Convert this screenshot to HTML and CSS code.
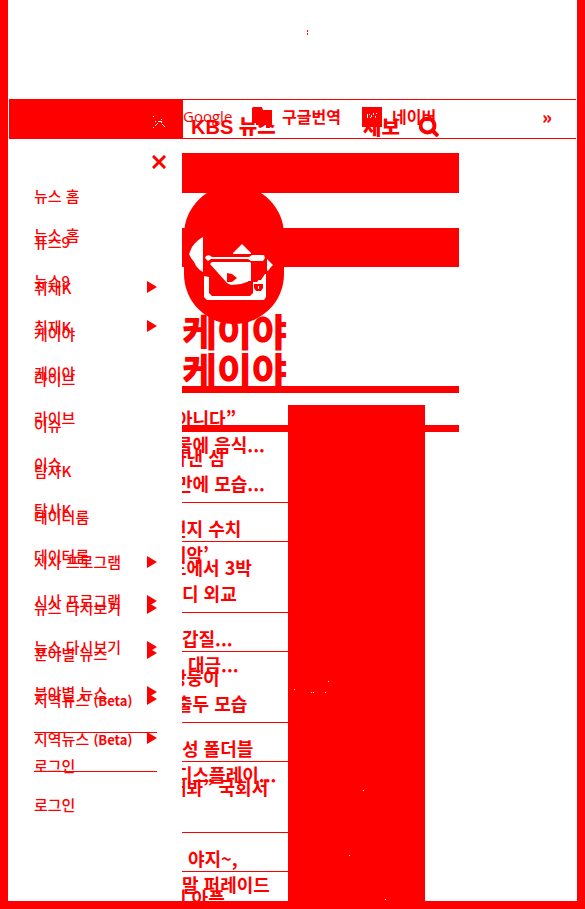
FILE: index.html
```html
<!DOCTYPE html>
<html lang="ko">
<head>
<meta charset="utf-8">
<meta name="viewport" content="width=device-width, initial-scale=1">
<title>KBS 뉴스</title>
<link rel="stylesheet" href="styles.css">
</head>
<body>
<div class="page">
  <div class="top"><svg class="dots" viewBox="0 0 1 5" aria-hidden="true"><path d="M0 0h1v2H0zM0 3h1v2H0z"/></svg></div>
  <header class="bar">
    <div class="bar-fill"><svg viewBox="0 0 13 13" aria-hidden="true"><path d="M0 0h1v1H0zM8 3h1v1H8zM2 5h1v1H2zM5 5h4v1H5zM8 6h1v1H8zM4 7h1v1H4zM9 8h1v1H9zM3 8h1v1H3zM10 9h1v1h-1zM2 9h1v1H2zM0 11h1v1H0zM11 10h1v1h-1z"/></svg></div>
    <div class="stack bar-body">
      <nav class="translate" aria-label="번역">
        <a href="#" class="google">Google</a>
        <a href="#" class="tool"><svg width="20" height="22" viewBox="0 0 20 22" aria-hidden="true"><path d="M1 0h9l1 3h9v16h-2v2h-4v-3H4v-2H0V1z"/></svg>구글번역</a>
        <a href="#" class="tool"><svg width="20" height="20" viewBox="0 0 20 20" aria-hidden="true"><path d="M0 0h20v20H0z"/><path class="w" d="M5 7h1v4H5zM7 7h1v1H7zM9 8h1v2H9zM11 6h1v2h-1zM14 6h1v1h-1zM13 9h1v2h-1zM8 10h1v1H8z"/></svg>네이버</a>
        <a href="#" class="more">»</a>
      </nav>
      <div class="brand">
        <a href="#" class="logo">KBS 뉴스</a>
        <a href="#" class="report">제보</a>
        <button class="search" aria-label="검색"><svg width="20" height="20" viewBox="0 0 20 20" aria-hidden="true"><circle cx="8.500" cy="8.500" r="7"/><path d="M13 13l6 6"/></svg></button>
      </div>
    </div>
  </header>
  <div class="body">
    <aside class="stack side">
      <div class="menu">
        <ul>
          <li><a href="#">뉴스 홈</a></li><li><a href="#">뉴스9</a></li><li class="sub"><a href="#">취재K</a></li><li><a href="#">케이야</a></li><li><a href="#">라이브</a></li><li><a href="#">이슈</a></li><li><a href="#">탐사K</a></li><li><a href="#">데이터룸</a></li><li class="sub"><a href="#">시사 프로그램</a></li><li class="sub"><a href="#">뉴스 다시보기</a></li><li class="sub"><a href="#">분야별 뉴스</a></li><li class="sub"><a href="#">지역뉴스 <small>(Beta)</small></a></li>
        </ul>
        <a href="#" class="login">로그인</a>
      </div>
      <div class="menu lower">
        <button class="close" aria-label="닫기"><svg width="14" height="14" viewBox="0 0 14 14" aria-hidden="true"><path d="M2 2l10 10M12 2L2 12"/></svg></button>
        <ul>
          <li><a href="#">뉴스 홈</a></li><li><a href="#">뉴스9</a></li><li class="sub"><a href="#">취재K</a></li><li><a href="#">케이야</a></li><li><a href="#">라이브</a></li><li><a href="#">이슈</a></li><li><a href="#">탐사K</a></li><li><a href="#">데이터룸</a></li><li class="sub"><a href="#">시사 프로그램</a></li><li class="sub"><a href="#">뉴스 다시보기</a></li><li class="sub"><a href="#">분야별 뉴스</a></li><li class="sub"><a href="#">지역뉴스 <small>(Beta)</small></a></li>
        </ul>
        <a href="#" class="login">로그인</a>
      </div>
    </aside>
    <main class="stack main">
      <section class="feed">
        <div class="banner"></div>
        <h1>케이야</h1>
        <div class="rows">
          <article><p class="cut-6">아니다”</p><p class="cut-6">물에 음식...</p></article>
          <article><p class="cut-12">먼지 수치</p><p class="cut-12">최악’</p></article>
          <article><p>갑질...</p><p class="push-6">대금...</p></article>
          <article><p>성 폴더블</p><p class="cut-6">디스플레이...</p></article>
          <article><p class="push-6">야지~,</p><p>말 퍼레이드</p></article>
        </div>
      </section>
      <section class="feed lower">
        <div class="banner"></div>
        <h2>케이야</h2>
        <div class="rows">
          <article><p class="cut-12">아낸 섬</p><p class="cut-6">만에 모습...</p></article>
          <article><p class="cut-12">드에서 3박</p><p>디 외교</p></article>
          <article><p class="cut-12">쌍둥이</p><p class="cut-6">출두 모습</p></article>
          <article><p class="cut-12">내봐” 국회서</p></article>
          <article><p class="cut-12">이 아픈</p></article>
        </div>
      </section>
      <div class="thumbs"><svg width="137" height="495" viewBox="288 405 137 495" aria-hidden="true"><path d="M328 681h1v1h-1zM294 689h1v1h-1zM311 692h1v1h-1zM313 692h1v1h-1zM325 692h1v1h-1zM363 790h1v1h-1zM349 855h1v1h-1zM385 899h1v1h-1z"/></svg></div>
      <svg class="emblem" width="100" height="138" viewBox="184 186 100 138" aria-hidden="true">
        <circle cx="234" cy="235" r="50"/><circle cx="234" cy="274" r="50"/>
        <path d="M184 235h100v39H184z"/>
        <g class="w">
          <path d="M203 237v35q-4-2-7-6-2-5-5-8l-2-4 3-7q5-7 11-10z"/>
          <path d="M242 244l9 9v1h-18v-1z"/>
          <path d="M267 259l6 6-3 3-1 2-2 1z"/>
          <path d="M206 256l3-1 3 2h37l3-2h12l1 3-2 3h-12l-3-2h-37l-3 2-3-3z"/>
          <path d="M210 264l2-2h38l1 1v18l-4 1-6 2-10 1-4-2z"/>
          <path d="M204 276l5 1v16l3 3h38l3-3v-11h3v-2h5l4-6h1v23l-2 3h-57l-3-3z"/>
        </g>
        <path d="M227 273l5 1 5 4-5 4h-5zM251 262h11v14l-5 6h-4v5l-2 4h-3v-10h3zM254 284h9v4l-2 3h-5l-2-3z"/>
        <path class="w" d="M258 286h1v3h-1z"/>
      </svg>
    </main>
  </div>
</div>
</body>
</html>
```
FILE: styles.css
```css
:root { --red: #f00; }
* { box-sizing: border-box; margin: 0; padding: 0; }
body { background: #fff; color: var(--red); font-family: "Noto Sans CJK KR", "Noto Sans", sans-serif; font-size: 15px; }
a { color: inherit; text-decoration: none; }
ul { list-style: none; }
button { background: none; border: 0; color: inherit; }
svg { display: block; fill: var(--red); }
.w { fill: #fff; }
.page { height: 100vh; display: flex; flex-direction: column; border: solid var(--red); border-width: 0 8px 8px; overflow: hidden; }
.stack { display: grid; grid-template-columns: minmax(0, 1fr); }
.stack > * { grid-area: 1 / 1; }

.top { flex: none; height: 99px; padding: 30px 0 0 299px; }
.dots { width: 1px; height: 5px; }
.bar { flex: none; display: grid; grid-template-columns: 174px 1fr; height: 40px; margin: 0 1px; border: solid var(--red); border-width: 1px 0; }
.bar-fill { background: var(--red); padding: 16px 0 0 144px; }
.bar-fill svg { width: 13px; height: 13px; fill: #fff; }
.bar-body { grid-template-rows: 38px; }
.translate { display: flex; align-items: flex-start; line-height: 32px; font-weight: 700; }
.google { width: 69px; font-family: "Open Sans", sans-serif; font-weight: 500; }
.tool { display: flex; gap: 10px; width: 110px; font-size: 16px; }
.tool svg { margin-top: 7px; }
.more { margin: 0 24px 0 auto; font-size: 18px; font-weight: 900; }
.brand { display: flex; align-items: flex-start; padding-left: 8px; padding-top: 11px; line-height: 32px; }
.logo { width: 172px; font-family: "Liberation Sans", "Noto Sans CJK KR", sans-serif; font-size: 20px; font-weight: 900; }
.report { width: 56px; font-size: 20px; font-weight: 900; }
.search svg { margin-top: 6px; fill: none; stroke: var(--red); stroke-width: 4; }

.body { flex: 1; min-height: 0; display: grid; grid-template-columns: 174px 1fr; grid-template-rows: minmax(0, 1fr); }
.side { align-items: start; overflow: hidden; }
.menu { padding: 34px 25px 0 26px; font-weight: 500; }
.menu.lower { padding-top: 16px; }
.menu small { font-size: 13px; font-weight: 700; }
.close { display: block; height: 57px; margin: 0 -9px 0 auto; }
.close svg { margin-bottom: 43px; fill: none; stroke: var(--red); stroke-width: 3; stroke-linecap: square; }
.menu ul { display: grid; grid-auto-rows: 1fr; height: 560px; padding-bottom: 10px; border-bottom: 1px solid var(--red); }
.menu li { display: flex; align-items: center; justify-content: space-between; white-space: nowrap; }
.sub::after { content: ""; border: solid transparent; border-width: 6px 0 6px 10px; border-left-color: var(--red); }
.login { display: block; padding-top: 22px; line-height: 22px; }

.main { position: relative; align-items: start; overflow: hidden; }
.feed { padding-top: 14px; }
.feed.lower { padding-top: 89px; }
.banner { width: 277px; height: 40px; background: var(--red); }
.lower .banner { height: 39px; }
h1, h2 { box-sizing: content-box; width: 277px; padding: 112px 0 31px; border-bottom: 7px solid var(--red); font-size: 38px; font-weight: 900; line-height: 50px; }
h2 { padding-top: 77px; }
article { width: 106px; height: 110px; padding-top: 12px; border-bottom: 1px solid var(--red); }
article p { font-size: 18px; font-weight: 700; line-height: 26px; white-space: nowrap; }
.cut-6 { text-indent: -6px; }
.cut-12 { text-indent: -12px; }
.push-6 { text-indent: 6px; }
.thumbs { align-self: stretch; width: 137px; margin: 266px 0 1px 106px; background: var(--red); }
.thumbs svg { fill: #fff; }
.emblem { position: absolute; left: 2px; top: 47px; }
```
